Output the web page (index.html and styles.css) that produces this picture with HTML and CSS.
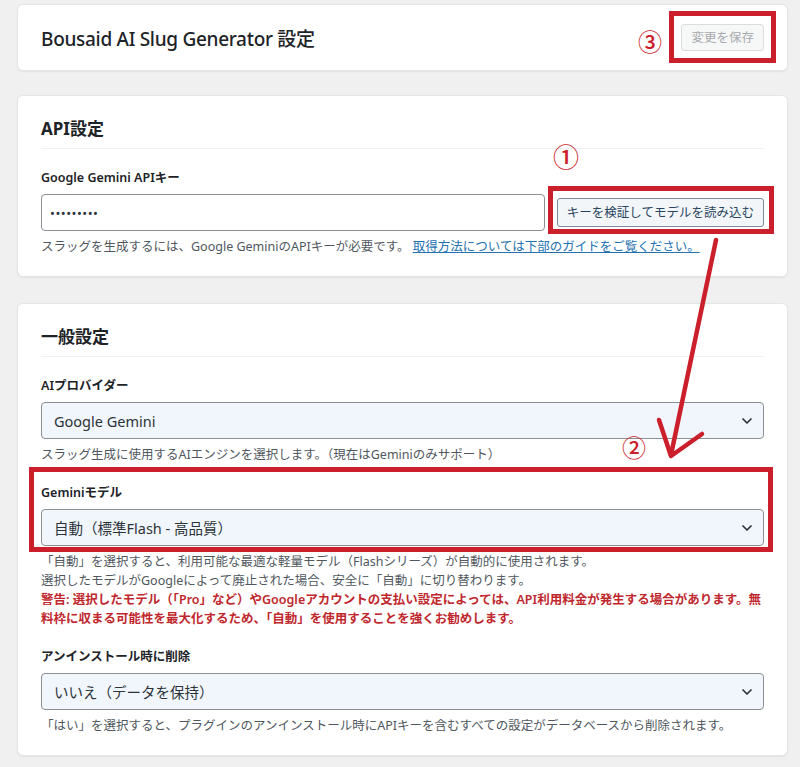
FILE: index.html
```html
<!DOCTYPE html>
<html lang="ja">
<head>
<meta charset="utf-8">
<title>Bousaid AI Slug Generator 設定</title>
<link rel="stylesheet" href="styles.css">
</head>
<body>
<div class="page">
  <div class="card header-card">
    <h1 class="page-title">Bousaid AI Slug Generator 設定</h1>
    <button class="btn btn-disabled" disabled>変更を保存</button>
  </div>

  <div class="card section">
    <h2 class="section-title">API設定</h2>
    <div class="field first">
      <label class="field-label">Google Gemini APIキー</label>
      <div class="input-row">
        <input class="text-input" type="password" value="abcdefghi">
        <button class="btn btn-secondary">キーを検証してモデルを読み込む</button>
      </div>
      <p class="desc">スラッグを生成するには、Google GeminiのAPIキーが必要です。 <a href="#" class="link">取得方法については下部のガイドをご覧ください。</a></p>
    </div>
  </div>

  <div class="card section general">
    <h2 class="section-title">一般設定</h2>
    <div class="field first">
      <label class="field-label">AIプロバイダー</label>
      <div class="select"><span>Google Gemini</span><svg class="chev" width="12" height="8" viewBox="0 0 12 8"><path d="M2 2 L6 6 L10 2" fill="none" stroke="#2c3338" stroke-width="1.7" stroke-linecap="round" stroke-linejoin="round"/></svg></div>
      <p class="desc">スラッグ生成に使用するAIエンジンを選択します。（現在はGeminiのみサポート）</p>
    </div>
    <div class="field">
      <label class="field-label">Geminiモデル</label>
      <div class="select"><span>自動（標準Flash - 高品質）</span><svg class="chev" width="12" height="8" viewBox="0 0 12 8"><path d="M2 2 L6 6 L10 2" fill="none" stroke="#2c3338" stroke-width="1.7" stroke-linecap="round" stroke-linejoin="round"/></svg></div>
      <p class="desc">「自動」を選択すると、利用可能な最適な軽量モデル（Flashシリーズ）が自動的に使用されます。<br>選択したモデルがGoogleによって廃止された場合、安全に「自動」に切り替わります。<br><span class="warn">警告: 選択したモデル（「Pro」など）やGoogleアカウントの支払い設定によっては、API利用料金が発生する場合があります。無料枠に収まる可能性を最大化するため、「自動」を使用することを強くお勧めします。</span></p>
    </div>
    <div class="field">
      <label class="field-label">アンインストール時に削除</label>
      <div class="select"><span>いいえ（データを保持）</span><svg class="chev" width="12" height="8" viewBox="0 0 12 8"><path d="M2 2 L6 6 L10 2" fill="none" stroke="#2c3338" stroke-width="1.7" stroke-linecap="round" stroke-linejoin="round"/></svg></div>
      <p class="desc">「はい」を選択すると、プラグインのアンインストール時にAPIキーを含むすべての設定がデータベースから削除されます。</p>
    </div>
  </div>

  <div class="anno-box box-save"></div>
  <div class="anno-box box-key"></div>
  <div class="anno-box box-model"></div>
  <span class="anno-num num-1">①</span>
  <span class="anno-num num-2">②</span>
  <span class="anno-num num-3">③</span>
  <svg class="anno-arrow" width="800" height="767" viewBox="0 0 800 767">
    <path d="M716 240 L671 455" fill="none" stroke="#cc1f2c" stroke-width="4.5" stroke-linecap="round"/>
    <path d="M659 420 L671 456 L702 434" fill="none" stroke="#cc1f2c" stroke-width="4.5" stroke-linecap="round" stroke-linejoin="round"/>
  </svg>
</div>
</body>
</html>
```

FILE: styles.css
```css
* { box-sizing: border-box; }

html, body {
  margin: 0;
  padding: 0;
  background: #f0f0f1;
}

body {
  font-family: "Noto Sans", "Noto Sans CJK JP", sans-serif;
  color: #1d2327;
}

.page {
  position: relative;
  width: 800px;
  min-height: 767px;
  padding: 4px 12px 15px 17px;
  display: flex;
  flex-direction: column;
  gap: 24px;
}

.card {
  background: #fff;
  border: 1px solid #e4e5e7;
  border-radius: 6px;
  box-shadow: 0 1px 2px rgba(0, 0, 0, 0.06);
}

.header-card {
  height: 67px;
  display: flex;
  align-items: center;
  justify-content: space-between;
  padding: 0 23px 0 23px;
}

.page-title {
  margin: 3px 0 0;
  font-size: 19px;
  font-weight: 500;
  letter-spacing: -0.3px;
  line-height: 26px;
  color: #1d2327;
}

.btn {
  font-family: "Noto Sans", "Noto Sans CJK JP", sans-serif;
  font-size: 12.5px;
  line-height: 17px;
  border-radius: 3px;
  cursor: pointer;
}

.btn-disabled {
  height: 27px;
  padding: 0 9px;
  color: #a7aaad;
  background: #f6f7f7;
  border: 1px solid #dcdcde;
}

.btn-secondary {
  height: 29px;
  padding: 0 9px;
  color: #2a4560;
  background: #f3f6f9;
  border: 1px solid #7d8a99;
  white-space: nowrap;
}

.section {
  padding: 0 23px 20px;
}

.general {
  margin-top: 2px;
}

.section-title {
  margin: 0;
  padding: 20px 0 6px;
  font-size: 17px;
  font-weight: 700;
  line-height: 26px;
  color: #1d2327;
  border-bottom: 1px solid #f0f0f1;
}

.field {
  display: flex;
  flex-direction: column;
  margin-top: 20px;
}

.field.first {
  margin-top: 20px;
}

.field-label {
  font-size: 12.5px;
  font-weight: 600;
  line-height: 18px;
  color: #1d2327;
  margin-bottom: 7px;
}

.input-row {
  display: flex;
  align-items: center;
  gap: 12px;
}

.text-input {
  flex: 1;
  height: 37px;
  padding: 0 8px;
  font-family: "Noto Sans", sans-serif;
  font-size: 13px;
  letter-spacing: 0.5px;
  color: #2c3338;
  background: #fff;
  border: 1px solid #8c8f94;
  border-radius: 4px;
}

.select {
  height: 37px;
  display: flex;
  align-items: center;
  justify-content: space-between;
  padding: 0 8px 0 12px;
  font-size: 14.5px;
  line-height: 20px;
  color: #2c3338;
  background: #f0f6fc;
  border: 1px solid #8c8f94;
  border-radius: 4px;
}

.chev {
  display: block;
  margin-right: 2px;
}

.desc {
  margin: 6px 0 0;
  font-size: 12.5px;
  line-height: 19px;
  color: #50575e;
}

.link {
  color: #2271b1;
  text-decoration: underline;
}

.warn {
  color: #c0282e;
  font-weight: 600;
}

.anno-box {
  position: absolute;
  border: 5px solid #cc1f2c;
  pointer-events: none;
}

.box-save {
  left: 669px;
  top: 11px;
  width: 107px;
  height: 52px;
}

.box-key {
  left: 548px;
  top: 186px;
  width: 226px;
  height: 48px;
}

.box-model {
  left: 29px;
  top: 467px;
  width: 744px;
  height: 85px;
}

.anno-num {
  position: absolute;
  font-family: "Noto Sans CJK JP", sans-serif;
  font-weight: 500;
  color: #cc1f2c;
  line-height: 1;
  pointer-events: none;
}

.num-1 {
  left: 553px;
  top: 143px;
  font-size: 26px;
}

.num-2 {
  left: 622px;
  top: 435px;
  font-size: 24px;
}

.num-3 {
  left: 638px;
  top: 29px;
  font-size: 24px;
}

.anno-arrow {
  position: absolute;
  left: 0;
  top: 0;
  pointer-events: none;
}
```
